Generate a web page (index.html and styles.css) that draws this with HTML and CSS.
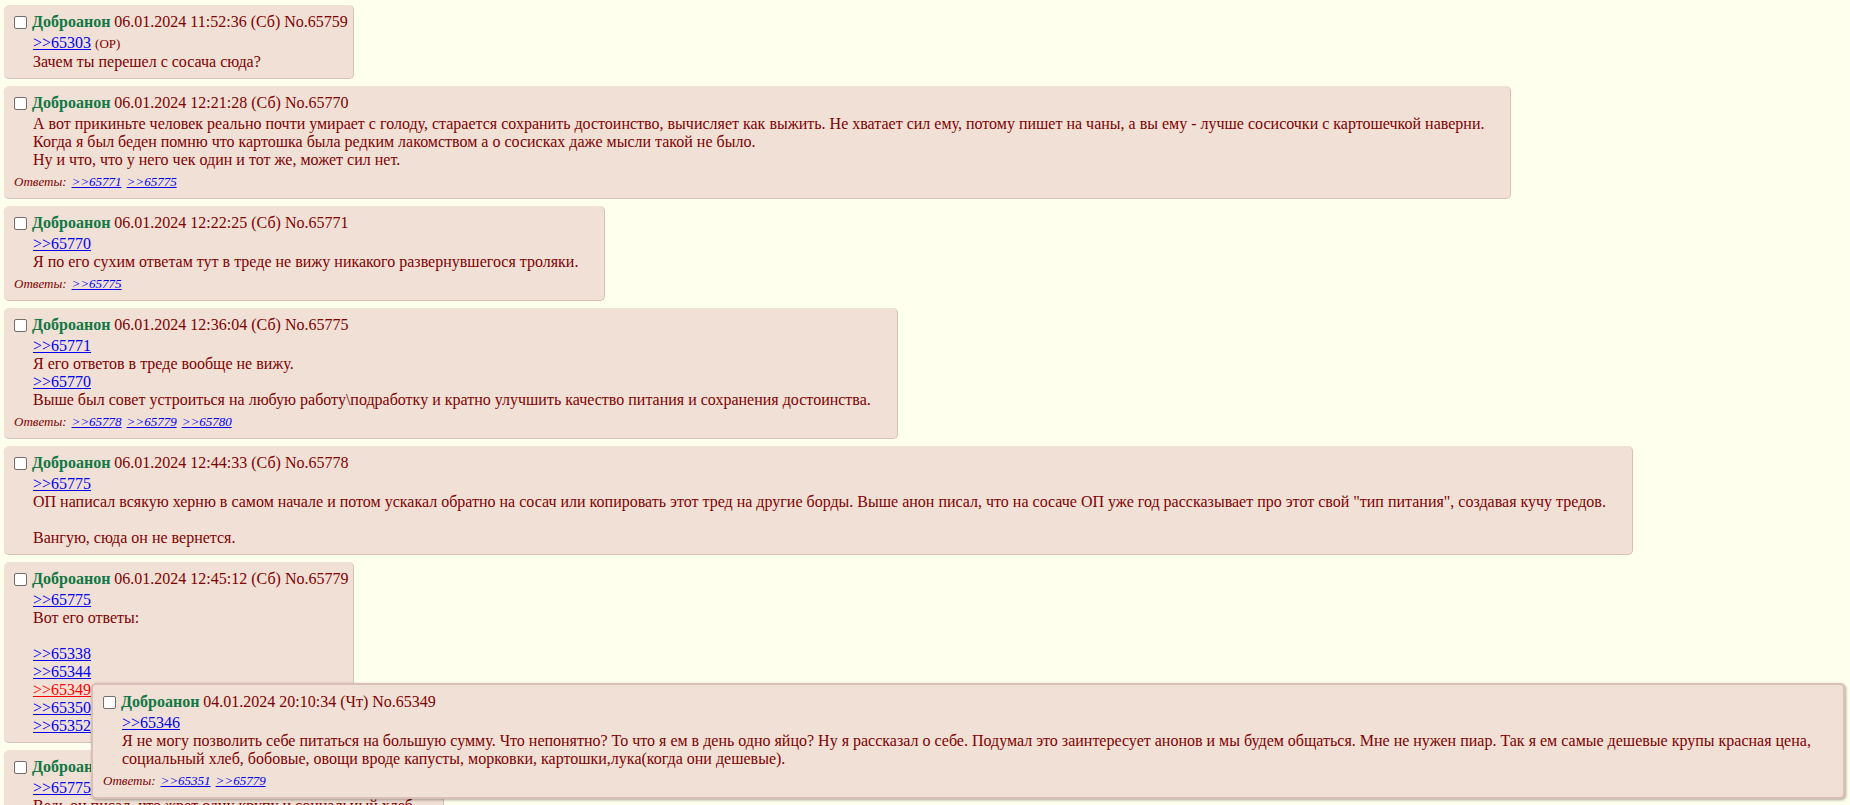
FILE: index.html
```html
<!DOCTYPE html>
<html lang="ru">
<head>
    <meta charset="UTF-8">
    <meta name="viewport" content="width=device-width, initial-scale=1.0">
    <title>Тред</title>
    <link rel="stylesheet" href="styles.css">
</head>
<body>
    <div class="thread">
        <div class="post">
            <label class="post-head"><input type="checkbox"><span class="post-name">Доброанон</span><span class="post-date">06.01.2024 11:52:36 (Сб) No.65759</span></label>
            <div class="post-message">
                <a href="#" class="post-link">&gt;&gt;65303</a> <span class="post-op">(OP)</span><br>
                Зачем ты перешел с сосача сюда?
            </div>
        </div>

        <div class="post">
            <label class="post-head"><input type="checkbox"><span class="post-name">Доброанон</span><span class="post-date">06.01.2024 12:21:28 (Сб) No.65770</span></label>
            <div class="post-message">
                А вот прикиньте человек реально почти умирает с голоду, старается сохранить достоинство, вычисляет как выжить. Не хватает сил ему, потому пишет на чаны, а вы ему - лучше сосисочки с картошечкой наверни.<br>
                Когда я был беден помню что картошка была редким лакомством а о сосисках даже мысли такой не было.<br>
                Ну и что, что у него чек один и тот же, может сил нет.
            </div>
            <div class="post-refmap"><em>Ответы:</em><a href="#">&gt;&gt;65771</a><a href="#">&gt;&gt;65775</a></div>
        </div>

        <div class="post">
            <label class="post-head"><input type="checkbox"><span class="post-name">Доброанон</span><span class="post-date">06.01.2024 12:22:25 (Сб) No.65771</span></label>
            <div class="post-message">
                <a href="#" class="post-link">&gt;&gt;65770</a><br>
                Я по его сухим ответам тут в треде не вижу никакого развернувшегося троляки.
            </div>
            <div class="post-refmap"><em>Ответы:</em><a href="#">&gt;&gt;65775</a></div>
        </div>

        <div class="post">
            <label class="post-head"><input type="checkbox"><span class="post-name">Доброанон</span><span class="post-date">06.01.2024 12:36:04 (Сб) No.65775</span></label>
            <div class="post-message">
                <a href="#" class="post-link">&gt;&gt;65771</a><br>
                Я его ответов в треде вообще не вижу.<br>
                <a href="#" class="post-link">&gt;&gt;65770</a><br>
                Выше был совет устроиться на любую работу\подработку и кратно улучшить качество питания и сохранения достоинства.
            </div>
            <div class="post-refmap"><em>Ответы:</em><a href="#">&gt;&gt;65778</a><a href="#">&gt;&gt;65779</a><a href="#">&gt;&gt;65780</a></div>
        </div>

        <div class="post">
            <label class="post-head"><input type="checkbox"><span class="post-name">Доброанон</span><span class="post-date">06.01.2024 12:44:33 (Сб) No.65778</span></label>
            <div class="post-message">
                <a href="#" class="post-link">&gt;&gt;65775</a><br>
                ОП написал всякую херню в самом начале и потом ускакал обратно на сосач или копировать этот тред на другие борды. Выше анон писал, что на сосаче ОП уже год рассказывает про этот свой "тип питания", создавая кучу тредов.<br>
                <br>
                Вангую, сюда он не вернется.
            </div>
        </div>

        <div class="post">
            <label class="post-head"><input type="checkbox"><span class="post-name">Доброанон</span><span class="post-date">06.01.2024 12:45:12 (Сб) No.65779</span></label>
            <div class="post-message">
                <a href="#" class="post-link">&gt;&gt;65775</a><br>
                Вот его ответы:<br>
                <br>
                <a href="#" class="post-link">&gt;&gt;65338</a><br>
                <a href="#" class="post-link">&gt;&gt;65344</a><br>
                <a href="#" class="post-link hover">&gt;&gt;65349</a><br>
                <a href="#" class="post-link">&gt;&gt;65350</a><br>
                <a href="#" class="post-link">&gt;&gt;65352</a>
            </div>
        </div>

        <div class="post">
            <label class="post-head"><input type="checkbox"><span class="post-name">Доброанон</span><span class="post-date">06.01.2024 12:48:57 (Сб) No.65780</span></label>
            <div class="post-message">
                <a href="#" class="post-link">&gt;&gt;65775</a><br>
                Ведь он писал, что жрет одну крупу и социальный хлеб.
            </div>
        </div>
    </div>

    <div class="post post-preview">
        <label class="post-head"><input type="checkbox"><span class="post-name">Доброанон</span><span class="post-date">04.01.2024 20:10:34 (Чт) No.65349</span></label>
        <div class="post-message">
            <a href="#" class="post-link">&gt;&gt;65346</a><br>
            Я не могу позволить себе питаться на большую сумму. Что непонятно? То что я ем в день одно яйцо? Ну я рассказал о себе. Подумал это заинтересует анонов и мы будем общаться. Мне не нужен пиар. Так я ем самые дешевые крупы красная цена, социальный хлеб, бобовые, овощи вроде капусты, морковки, картошки,лука(когда они дешевые).
        </div>
        <div class="post-refmap"><em>Ответы:</em><a href="#">&gt;&gt;65351</a><a href="#">&gt;&gt;65779</a></div>
    </div>
</body>
</html>
```

FILE: styles.css
```css
* {
    box-sizing: border-box;
}

body {
    margin: 0;
    background: #ffffee;
    color: #800000;
    font-family: "Liberation Serif", "Times New Roman", serif;
    font-size: 16px;
}

a {
    color: #0000ee;
}

.thread {
    display: flex;
    flex-direction: column;
    align-items: flex-start;
    gap: 7px;
    padding: 5px 4px;
}

.post {
    background: #f0e0d6;
    border-right: 1px solid #d9bfb7;
    border-bottom: 1px solid #d9bfb7;
    border-radius: 5px;
    padding: 8px 5px 7px 6px;
}

.post-head {
    display: flex;
    align-items: center;
    height: 18px;
    white-space: nowrap;
}

.post-head input {
    appearance: none;
    width: 13px;
    height: 13px;
    margin: 0 5px 0 4px;
    border: 1px solid #6f6f6f;
    border-radius: 2px;
    background: #fff;
}

.post-name {
    color: #117743;
    font-weight: bold;
}

.post-date {
    margin-left: 4px;
}

.post-message {
    margin: 3px 21px 0 23px;
    line-height: 18px;
}

.post-link.hover {
    color: #ff0000;
}

.post-op {
    font-size: 13px;
}

.post-refmap {
    display: flex;
    gap: 5px;
    margin: 5px 0 1px 4px;
    font-size: 13px;
    line-height: 16px;
    font-style: italic;
}

.post-preview {
    position: absolute;
    left: 91px;
    top: 683px;
    right: 5px;
    border: 2px solid #d9bfb7;
    box-shadow: 1px 1px 3px rgba(0, 0, 0, 0.35);
}
```
